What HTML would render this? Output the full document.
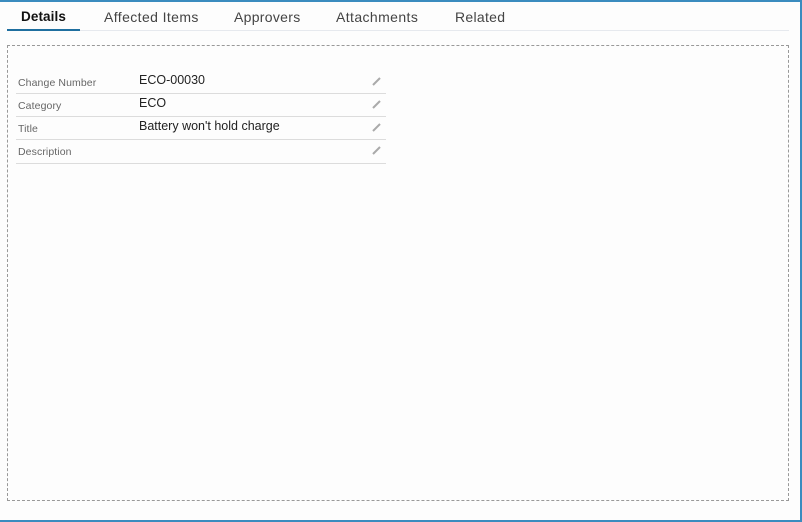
<!DOCTYPE html>
<html><head><style>
html,body{margin:0;padding:0;width:802px;height:522px;overflow:hidden;background:#fff;font-family:"Liberation Sans",sans-serif;}
.frame{position:absolute;left:0;top:0;border-top:2px solid #3a8cbf;border-right:2px solid #3a8cbf;border-bottom:2px solid #3a8cbf;box-sizing:border-box;width:802px;height:522px;background:#fdfdfd}
.tabbar{position:absolute;left:7px;top:30px;width:782px;height:1px;background:#e6e9ee}
.ul{position:absolute;left:7px;top:29px;width:73px;height:2px;background:#1f6f9f}
.tab{position:absolute;top:9px;font-size:14px;color:#444;letter-spacing:0.1px}
.box{position:absolute;left:7px;top:45px;width:782px;height:456px;border:1px dashed #999;box-sizing:border-box}
.row{position:absolute;left:16px;width:370px;height:23px;border-bottom:1px solid #dcdcdc}
.lbl{position:absolute;left:2px;top:7px;font-size:10.5px;color:#666;letter-spacing:0.1px}
.val{position:absolute;left:123px;top:3px;font-size:12.5px;color:#222}
.pen{position:absolute;left:355px;top:5px}
</style></head><body>
<div class="frame"></div>
<div class="tabbar"></div><div class="ul"></div>
<div class="tab" style="left:21px;color:#111;font-weight:bold;font-size:13.5px">Details</div>
<div class="tab" style="left:104px;letter-spacing:0.4px">Affected Items</div>
<div class="tab" style="left:234px;letter-spacing:0.3px">Approvers</div>
<div class="tab" style="left:336px;letter-spacing:0.4px">Attachments</div>
<div class="tab" style="left:455px;letter-spacing:0.3px">Related</div>
<div class="box"></div>
<div class="row" style="top:70px"><span class="lbl">Change Number</span><span class="val">ECO-00030</span><svg class="pen" width="12" height="12" viewBox="0 0 12 12"><path d="M2 10 L9 3" stroke="#aaa" stroke-width="2"/></svg></div>
<div class="row" style="top:93px"><span class="lbl">Category</span><span class="val">ECO</span><svg class="pen" width="12" height="12" viewBox="0 0 12 12"><path d="M2 10 L9 3" stroke="#aaa" stroke-width="2"/></svg></div>
<div class="row" style="top:116px"><span class="lbl">Title</span><span class="val">Battery won't hold charge</span><svg class="pen" width="12" height="12" viewBox="0 0 12 12"><path d="M2 10 L9 3" stroke="#aaa" stroke-width="2"/></svg></div>
<div class="row" style="top:139px;height:24px"><span class="lbl">Description</span><svg class="pen" width="12" height="12" viewBox="0 0 12 12"><path d="M2 10 L9 3" stroke="#aaa" stroke-width="2"/></svg></div>
</body></html>
